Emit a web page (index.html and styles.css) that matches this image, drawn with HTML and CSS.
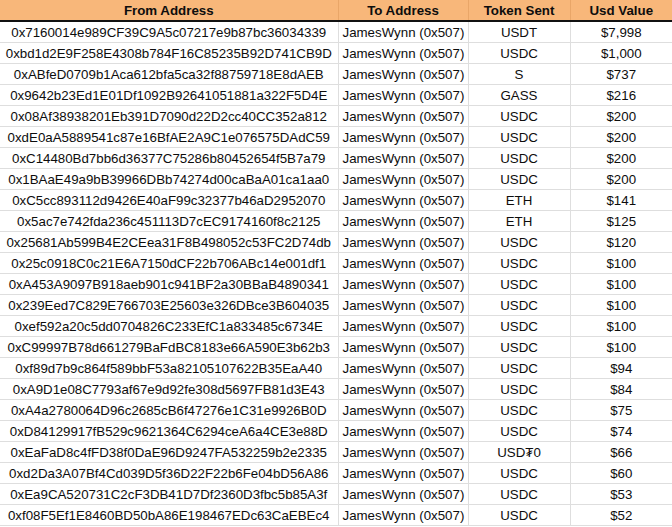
FILE: index.html
```html
<!DOCTYPE html>
<html>
<head>
<meta charset="utf-8">
<link rel="stylesheet" href="styles.css">
</head>
<body>
<table class="sheet">
<colgroup><col class="c1"><col class="c2"><col class="c3"><col class="c4"></colgroup>
<thead>
<tr><th>From Address</th><th>To Address</th><th>Token Sent</th><th>Usd Value</th></tr>
</thead>
<tbody>
<tr><td>0x7160014e989CF39C9A5c07217e9b87bc36034339</td><td class="to">JamesWynn (0x507)</td><td>USDT</td><td>$7,998</td></tr>
<tr><td>0xbd1d2E9F258E4308b784F16C85235B92D741CB9D</td><td class="to">JamesWynn (0x507)</td><td>USDC</td><td>$1,000</td></tr>
<tr><td>0xABfeD0709b1Aca612bfa5ca32f88759718E8dAEB</td><td class="to">JamesWynn (0x507)</td><td>S</td><td>$737</td></tr>
<tr><td>0x9642b23Ed1E01Df1092B92641051881a322F5D4E</td><td class="to">JamesWynn (0x507)</td><td>GASS</td><td>$216</td></tr>
<tr><td>0x08Af38938201Eb391D7090d22D2cc40CC352a812</td><td class="to">JamesWynn (0x507)</td><td>USDC</td><td>$200</td></tr>
<tr><td>0xdE0aA5889541c87e16BfAE2A9C1e076575DAdC59</td><td class="to">JamesWynn (0x507)</td><td>USDC</td><td>$200</td></tr>
<tr><td>0xC14480Bd7bb6d36377C75286b80452654f5B7a79</td><td class="to">JamesWynn (0x507)</td><td>USDC</td><td>$200</td></tr>
<tr><td>0x1BAaE49a9bB39966DBb74274d00caBaA01ca1aa0</td><td class="to">JamesWynn (0x507)</td><td>USDC</td><td>$200</td></tr>
<tr><td>0xC5cc893112d9426E40aF99c32377b46aD2952070</td><td class="to">JamesWynn (0x507)</td><td>ETH</td><td>$141</td></tr>
<tr><td>0x5ac7e742fda236c451113D7cEC9174160f8c2125</td><td class="to">JamesWynn (0x507)</td><td>ETH</td><td>$125</td></tr>
<tr><td>0x25681Ab599B4E2CEea31F8B498052c53FC2D74db</td><td class="to">JamesWynn (0x507)</td><td>USDC</td><td>$120</td></tr>
<tr><td>0x25c0918C0c21E6A7150dCF22b706ABc14e001df1</td><td class="to">JamesWynn (0x507)</td><td>USDC</td><td>$100</td></tr>
<tr><td>0xA453A9097B918aeb901c941BF2a30BBaB4890341</td><td class="to">JamesWynn (0x507)</td><td>USDC</td><td>$100</td></tr>
<tr><td>0x239Eed7C829E766703E25603e326DBce3B604035</td><td class="to">JamesWynn (0x507)</td><td>USDC</td><td>$100</td></tr>
<tr><td>0xef592a20c5dd0704826C233EfC1a833485c6734E</td><td class="to">JamesWynn (0x507)</td><td>USDC</td><td>$100</td></tr>
<tr><td>0xC99997B78d661279BaFdBC8183e66A590E3b62b3</td><td class="to">JamesWynn (0x507)</td><td>USDC</td><td>$100</td></tr>
<tr><td>0xf89d7b9c864f589bbF53a82105107622B35EaA40</td><td class="to">JamesWynn (0x507)</td><td>USDC</td><td>$94</td></tr>
<tr><td>0xA9D1e08C7793af67e9d92fe308d5697FB81d3E43</td><td class="to">JamesWynn (0x507)</td><td>USDC</td><td>$84</td></tr>
<tr><td>0xA4a2780064D96c2685cB6f47276e1C31e9926B0D</td><td class="to">JamesWynn (0x507)</td><td>USDC</td><td>$75</td></tr>
<tr><td>0xD84129917fB529c9621364C6294ceA6a4CE3e88D</td><td class="to">JamesWynn (0x507)</td><td>USDC</td><td>$74</td></tr>
<tr><td>0xEaFaD8c4fFD38f0DaE96D9247FA532259b2e2335</td><td class="to">JamesWynn (0x507)</td><td>USD₮0</td><td>$66</td></tr>
<tr><td>0xd2Da3A07Bf4Cd039D5f36D22F22b6Fe04bD56A86</td><td class="to">JamesWynn (0x507)</td><td>USDC</td><td>$60</td></tr>
<tr><td>0xEa9CA520731C2cF3DB41D7Df2360D3fbc5b85A3f</td><td class="to">JamesWynn (0x507)</td><td>USDC</td><td>$53</td></tr>
<tr><td>0xf08F5Ef1E8460BD50bA86E198467EDc63CaEBEc4</td><td class="to">JamesWynn (0x507)</td><td>USDC</td><td>$52</td></tr>
</tbody>
</table>
</body>
</html>
```

FILE: styles.css
```css
html, body {
  margin: 0;
  padding: 0;
  background: #ffffff;
}

.sheet {
  border-collapse: collapse;
  table-layout: fixed;
  width: 672px;
  font-family: "Liberation Sans", Arial, sans-serif;
  font-size: 13.3px;
  color: #0d0d0d;
}

.c1 { width: 338px; }
.c2 { width: 130px; }
.c3 { width: 102px; }
.c4 { width: 102px; }

.sheet th {
  background: #f8b77a;
  font-weight: bold;
  height: 20px;
  padding: 0 4px;
  text-align: center;
  border-left: 1px solid #e9a668;
  border-bottom: 2px solid #111;
  color: #0d0d0d;
  white-space: nowrap;
}

.sheet th:first-child { border-left: none; }

.sheet td {
  height: 20px;
  padding: 0 3px;
  text-align: center;
  border: 1px solid #dedede;
  border-top: none;
  white-space: nowrap;
  overflow: hidden;
}

.sheet td:first-child { border-left: none; }
.sheet td:last-child { border-right: none; }

.sheet td.to {
  text-align: left;
  padding-left: 4px;
}
```
